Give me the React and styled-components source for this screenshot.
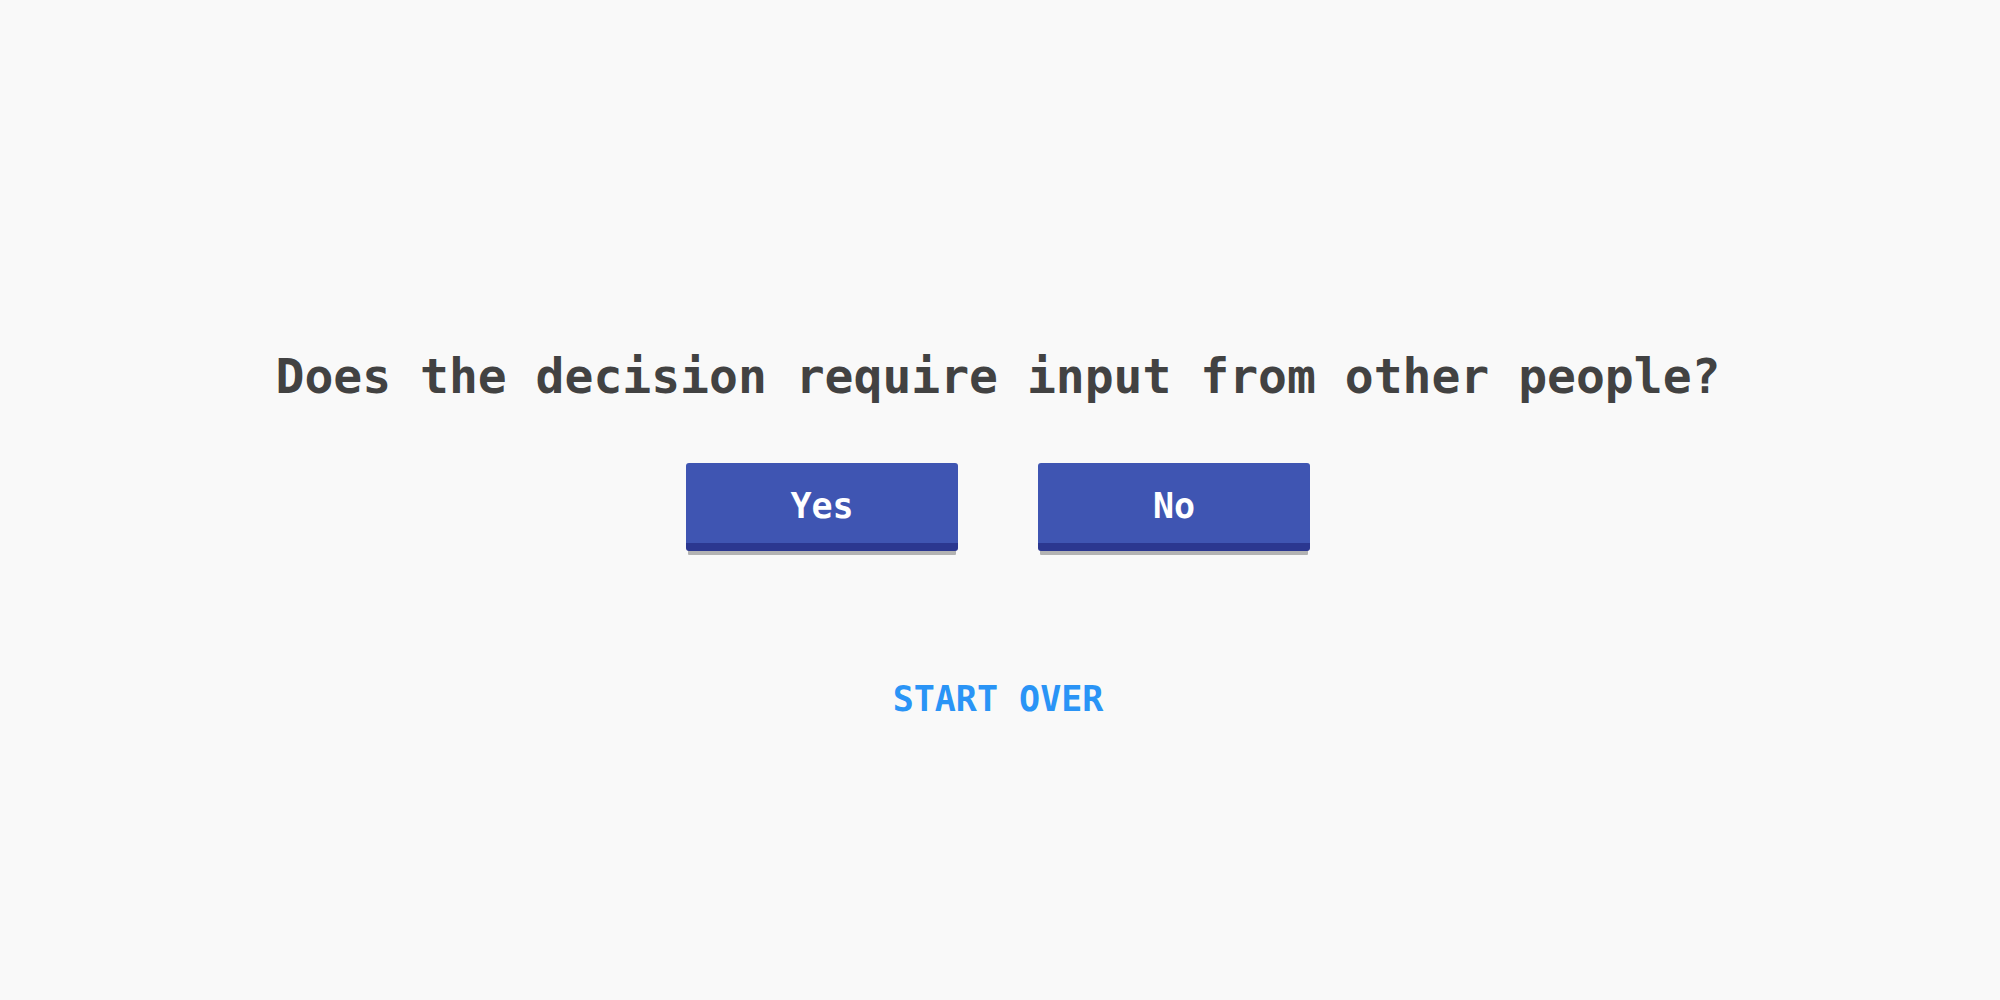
import React from "react";
import styled, { createGlobalStyle } from "styled-components";

const GlobalStyle = createGlobalStyle`
  html, body {
    margin: 0;
    padding: 0;
    background: #f9f9f9;
  }
  body {
    font-family: "DejaVu Sans Mono", "Liberation Mono", monospace;
  }
`;

const Page = styled.div`
  width: 2000px;
  height: 1000px;
  box-sizing: border-box;
  padding: 348px 4px 0 0;
  display: flex;
  flex-direction: column;
  align-items: center;
  background: #f9f9f9;
`;

const Question = styled.h1`
  margin: 0;
  font-size: 48px;
  line-height: 56px;
  font-weight: bold;
  color: #424242;
  text-align: center;
`;

const Choices = styled.div`
  display: flex;
  gap: 80px;
  margin-top: 59px;
`;

const Choice = styled.button`
  width: 272px;
  height: 88px;
  box-sizing: border-box;
  border: none;
  border-bottom: 8px solid #2b3790;
  border-radius: 3px;
  background: #3f55b2;
  box-shadow: 0 6px 0 -2px #b3b3b3;
  color: #ffffff;
  font-family: inherit;
  font-size: 35px;
  font-weight: bold;
  padding: 5px 0 0;
  cursor: pointer;
`;

const Restart = styled.button`
  margin-top: 126px;
  border: none;
  background: none;
  padding: 0;
  font-family: inherit;
  font-size: 35px;
  line-height: 44px;
  font-weight: bold;
  color: #2a94f6;
  cursor: pointer;
`;

export default function App() {
  return (
    <>
      <GlobalStyle />
      <Page>
        <Question>Does the decision require input from other people?</Question>
        <Choices>
          <Choice>Yes</Choice>
          <Choice>No</Choice>
        </Choices>
        <Restart>START OVER</Restart>
      </Page>
    </>
  );
}
